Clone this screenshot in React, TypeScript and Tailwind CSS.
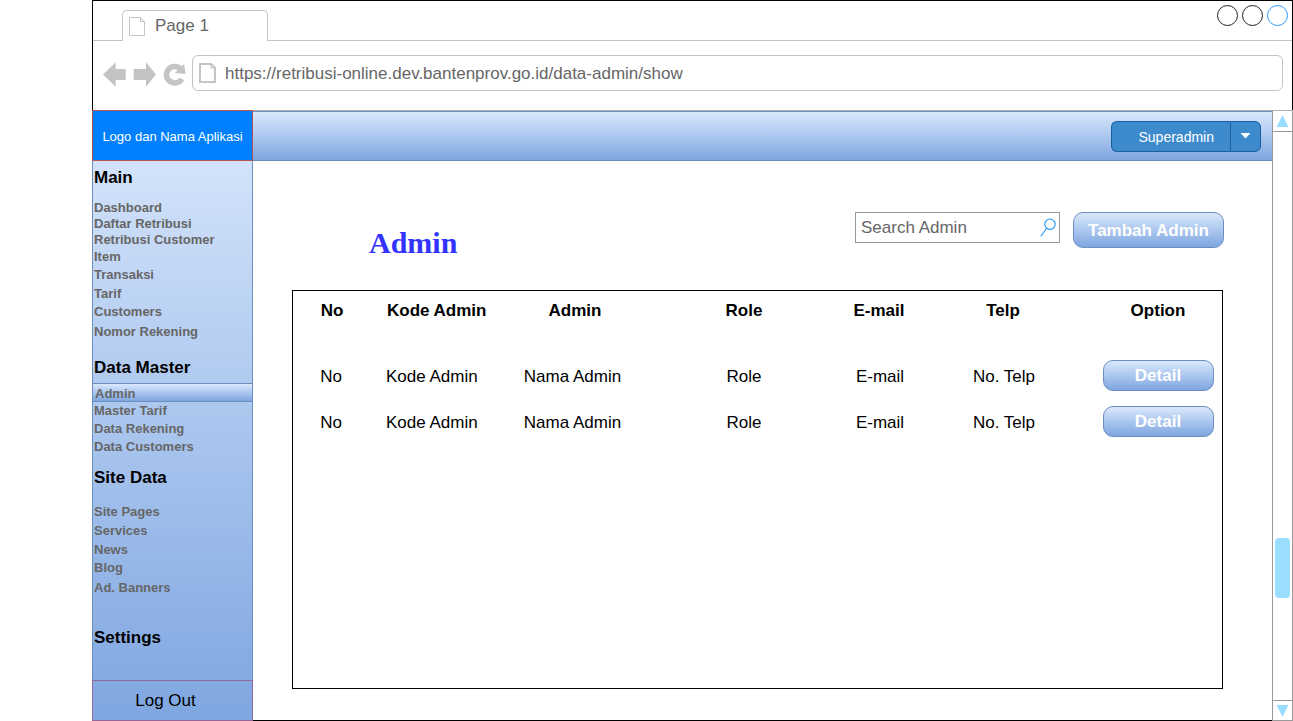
import React from "react";

type NavItem = { label: string; row: string };

const mainItems: NavItem[] = [
  { label: "Dashboard", row: "h-4" },
  { label: "Daftar Retribusi", row: "h-4" },
  { label: "Retribusi Customer", row: "h-4" },
  { label: "Item", row: "h-[18px]" },
  { label: "Transaksi", row: "h-[18px]" },
  { label: "Tarif", row: "h-5" },
  { label: "Customers", row: "h-4" },
  { label: "Nomor Rekening", row: "h-6" },
];

const masterItems: NavItem[] = [
  { label: "Master Tarif", row: "h-[18px]" },
  { label: "Data Rekening", row: "h-[18px]" },
  { label: "Data Customers", row: "h-[18px]" },
];

const siteItems: NavItem[] = [
  { label: "Site Pages", row: "h-5" },
  { label: "Services", row: "h-[18px]" },
  { label: "News", row: "h-5" },
  { label: "Blog", row: "h-4" },
  { label: "Ad. Banners", row: "h-6" },
];

const rows = [1, 2];

function NavHeading({ children }: { children: React.ReactNode }) {
  return <h2 className="pl-px text-[17px] leading-5 font-bold text-black">{children}</h2>;
}

function NavList({ items }: { items: NavItem[] }) {
  return (
    <ul>
      {items.map((item) => (
        <li key={item.label} className={`flex items-center ${item.row}`}>
          <a href="#" className="pl-px text-[13px] leading-4 font-bold text-[#666666]">
            {item.label}
          </a>
        </li>
      ))}
    </ul>
  );
}

function BrowserChrome() {
  return (
    <header className="border-x border-t border-black">
      <div className="flex h-10">
        <div className="w-[29px] border-b border-[#c4c4c4]" />
        <button
          type="button"
          className="mt-[9px] flex w-[146px] items-center rounded-t-[5px] border-x border-t border-[#c4c4c4] pl-1.5 text-[17px] leading-5 text-[#666666]"
        >
          <svg width="17" height="20" viewBox="0 0 17 20" fill="none" stroke="#c4c4c4" className="mr-[9px]">
            <path d="M0.5 1.5H11.5L15.5 5.5V19.5H0.5ZM11.5 1.5V5.5H15.5" />
          </svg>
          Page 1
        </button>
        <div className="flex flex-1 justify-end gap-1 border-b border-[#c4c4c4] pt-1 pr-1">
          <button type="button" aria-label="Minimize" className="size-[21px] rounded-full border border-[#222222]" />
          <button type="button" aria-label="Maximize" className="size-[21px] rounded-full border border-[#222222]" />
          <button type="button" aria-label="Close" className="size-[21px] rounded-full border border-[#2e9bff]" />
        </div>
      </div>
      <div className="flex h-[69px] items-start gap-1.5 pt-3.5 pr-[9px] pl-2.5">
        <button type="button" aria-label="Back" className="flex h-10 w-6 items-center">
          <svg width="24" height="26" viewBox="0 0 24 26" fill="#c4c4c4">
            <path d="M0 12.5L12.7 0.3V7H22.7V18H12.7V24.7Z" />
          </svg>
        </button>
        <button type="button" aria-label="Forward" className="flex h-10 w-6 items-center">
          <svg width="24" height="26" viewBox="0 0 24 26" fill="#c4c4c4">
            <path d="M23 12.5L13 0.3V7H0.7V18H13V24.7Z" />
          </svg>
        </button>
        <button type="button" aria-label="Reload" className="flex h-10 w-[23px] items-center">
          <svg width="23" height="26" viewBox="0 0 23 26">
            <path d="M17.5 6.9A8.2 8.2 0 1 0 18.8 16.8" fill="none" stroke="#c4c4c4" strokeWidth="5.6" />
            <path d="M21.1 2L22.5 12.1L11.7 11Z" fill="#c4c4c4" />
          </svg>
        </button>
        <div className="flex h-9 flex-1 items-center rounded-md border border-[#c4c4c4] pl-[5px]">
          <svg width="19" height="22" viewBox="0 0 19 22" fill="none" stroke="#c4c4c4" strokeWidth="2">
            <path d="M2 2H13L17 6V20H2Z" />
            <path d="M13 2V6H17" strokeWidth="1" />
          </svg>
          <input
            aria-label="Address"
            defaultValue="https://retribusi-online.dev.bantenprov.go.id/data-admin/show"
            className="ml-2 min-w-0 flex-1 pt-0.5 text-[17px] leading-5 text-[#666666] outline-none"
          />
        </div>
      </div>
    </header>
  );
}

function Sidebar() {
  return (
    <aside className="flex w-[161px] shrink-0 flex-col bg-linear-to-b from-[#dae8fc] to-[#7ea6e0]">
      <div className="flex h-[51px] items-center justify-center border border-[#b85450] bg-[#007fff] pt-0.5 text-[13px] leading-4 text-white">
        Logo dan Nama Aplikasi
      </div>
      <nav className="flex-1 border-x border-[#6c8ebf] pt-[7px]">
        <NavHeading>Main</NavHeading>
        <div className="mt-3">
          <NavList items={mainItems} />
        </div>
        <div className="mt-3.5">
          <NavHeading>Data Master</NavHeading>
        </div>
        <a
          href="#"
          aria-current="page"
          className="mt-[5px] flex h-[19px] items-center border-y border-[#6c8ebf] bg-linear-to-b from-[#dae8fc] to-[#7ea6e0] pt-0.5 pl-0.5 text-[13px] leading-4 font-bold text-[#666666]"
        >
          Admin
        </a>
        <NavList items={masterItems} />
        <div className="mt-3">
          <NavHeading>Site Data</NavHeading>
        </div>
        <div className="mt-3.5">
          <NavList items={siteItems} />
        </div>
        <div className="mt-7">
          <NavHeading>Settings</NavHeading>
        </div>
      </nav>
      <button
        type="button"
        className="h-[41px] border border-[#996699] pr-3.5 text-center text-[17px] leading-5 text-black"
      >
        Log Out
      </button>
    </aside>
  );
}

function TopBar() {
  return (
    <div className="flex h-[50px] items-center justify-end border-y border-[#6c8ebf] bg-linear-to-b from-[#dae8fc] to-[#7ea6e0] pr-[11px]">
      <button
        type="button"
        className="h-[31px] w-[119px] rounded-l-[6px] border-y border-l border-[#1a5f9e] bg-[#3d8bcd] pt-0.5 pr-4 text-right text-sm text-white"
      >
        Superadmin
      </button>
      <button
        type="button"
        aria-label="Open account menu"
        className="flex h-[31px] w-[31px] items-center justify-center rounded-r-[6px] border border-[#1a5f9e] bg-[#3d8bcd]"
      >
        <svg width="11" height="6" viewBox="0 0 11 6" fill="#ffffff">
          <path d="M0.5 0H10.5L5.5 5.5Z" />
        </svg>
      </button>
    </div>
  );
}

function AdminTable() {
  return (
    <div className="mr-[49px] mb-[31px] ml-[39px] flex-1 border border-black">
      <table className="w-full table-fixed text-center text-[17px] leading-5 text-black">
        <thead>
          <tr className="h-[63px] align-top">
            <th className="w-[78px] pt-[10px]">No</th>
            <th className="w-[132px] pt-[10px] pl-4 text-left">Kode Admin</th>
            <th className="w-[144px] pt-[10px]">Admin</th>
            <th className="w-[194px] pt-[10px]">Role</th>
            <th className="w-[76px] pt-[10px]">E-mail</th>
            <th className="w-[172px] pt-[10px]">Telp</th>
            <th className="w-[133px] pt-[10px] pl-[5px]">Option</th>
          </tr>
        </thead>
        <tbody>
          {rows.map((row) => (
            <tr key={row} className="h-[46px]">
              <td className="pr-0.5">No</td>
              <td className="pl-[15px] text-left">Kode Admin</td>
              <td className="pr-[5px]">Nama Admin</td>
              <td>Role</td>
              <td className="pl-0.5">E-mail</td>
              <td className="pl-0.5">No. Telp</td>
              <td className="pt-1.5 pl-[5px] align-top">
                <button
                  type="button"
                  className="h-[31px] w-[111px] rounded-[10px] border border-[#6c8ebf] bg-linear-to-b from-[#dae8fc] to-[#7ea6e0] font-bold text-white"
                >
                  Detail
                </button>
              </td>
            </tr>
          ))}
        </tbody>
      </table>
    </div>
  );
}

function PageScrollbar() {
  return (
    <div className="flex w-[21px] shrink-0 flex-col border-x border-b border-[#999999]">
      <button
        type="button"
        aria-label="Scroll up"
        className="flex h-[21px] items-center justify-center border-b border-[#999999]"
      >
        <svg width="13" height="12" viewBox="0 0 13 12" fill="#99ddff">
          <path d="M6.5 0L12.5 12H0.5Z" />
        </svg>
      </button>
      <div className="flex flex-1 flex-col items-center">
        <div className="flex-4" />
        <div className="h-[60px] w-[15px] rounded-[4px] bg-[#99ddff]" />
        <div className="flex-1" />
      </div>
      <button
        type="button"
        aria-label="Scroll down"
        className="flex h-5 items-center justify-center border-t border-[#999999]"
      >
        <svg width="13" height="12" viewBox="0 0 13 12" fill="#99ddff">
          <path d="M0.5 0H12.5L6.5 12Z" />
        </svg>
      </button>
    </div>
  );
}

export default function App() {
  return (
    <div className="flex min-h-screen flex-col bg-white pl-[92px] font-['Liberation_Sans',Arial,sans-serif]">
      <BrowserChrome />
      <div className="flex flex-1">
        <Sidebar />
        <div className="flex min-w-0 flex-1 border-t border-[#b0b0b0]">
          <main className="flex min-w-0 flex-1 flex-col border-b border-black">
            <TopBar />
            <div className="flex h-[129px] items-start justify-between pt-[51px] pr-12 pl-[116px]">
              <h1 className="mt-[13px] font-['Liberation_Serif','Times_New_Roman',serif] text-[30px] leading-9 font-bold text-[#3333ff]">
                Admin
              </h1>
              <div className="flex items-start gap-[13px]">
                <div className="flex h-[31px] w-[205px] items-center border border-[#999999] pr-[3px] pl-[5px]">
                  <input
                    type="text"
                    aria-label="Search Admin"
                    placeholder="Search Admin"
                    className="min-w-0 flex-1 text-[17px] leading-5 text-black outline-none placeholder:text-[#666666]"
                  />
                  <svg width="16" height="19" viewBox="0 0 16 19" fill="none" stroke="#1a90f5" strokeWidth="1.1">
                    <circle cx="10" cy="6.2" r="5.2" />
                    <path d="M6.6 10.2L0.8 18.2" />
                  </svg>
                </div>
                <button
                  type="button"
                  className="h-9 w-[151px] rounded-[10px] border border-[#6c8ebf] bg-linear-to-b from-[#dae8fc] to-[#7ea6e0] pt-0.5 text-[17px] leading-5 font-bold text-white"
                >
                  Tambah Admin
                </button>
              </div>
            </div>
            <AdminTable />
          </main>
          <PageScrollbar />
        </div>
      </div>
    </div>
  );
}
